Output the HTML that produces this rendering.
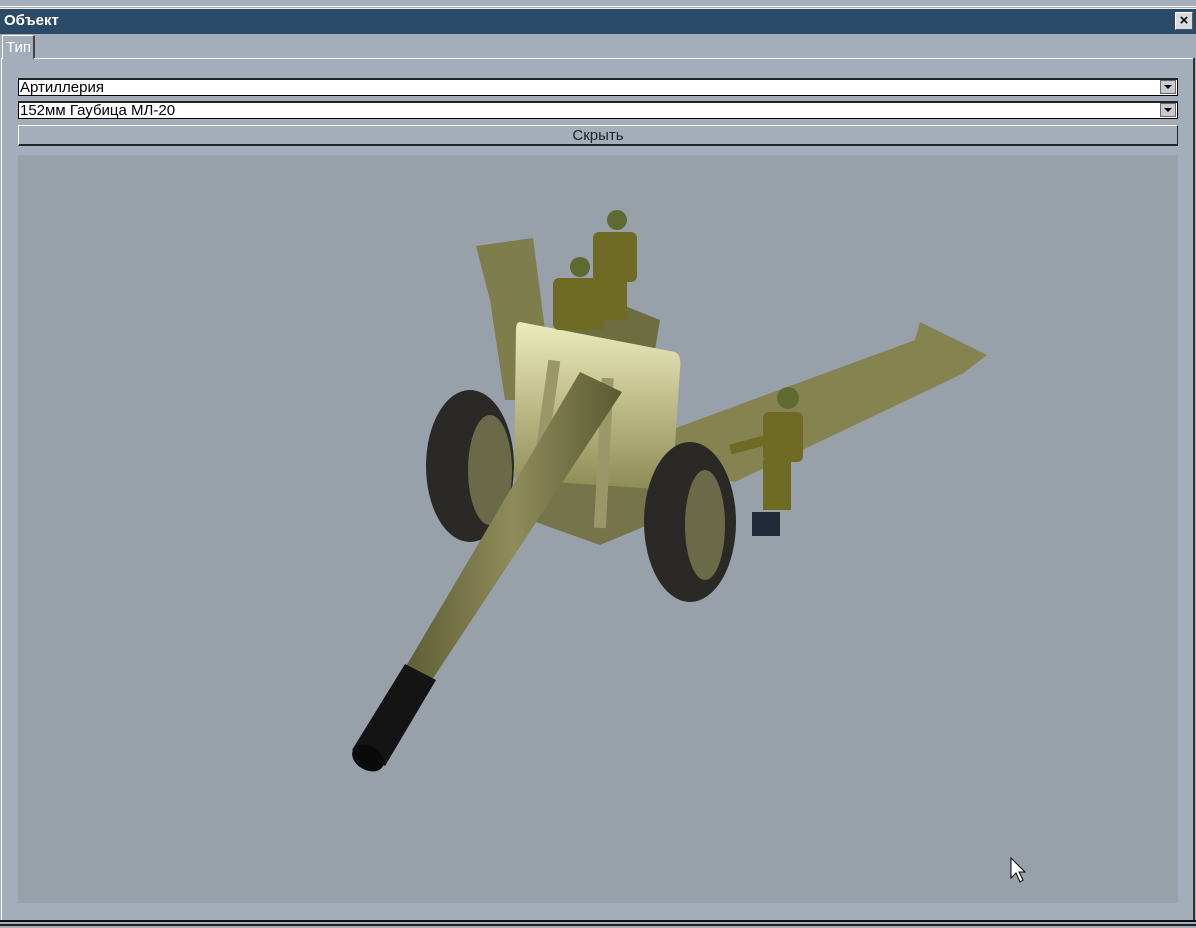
<!DOCTYPE html>
<html><head><meta charset="utf-8"><style>
body{margin:0;width:1196px;height:928px;background:#a4adba;position:relative;overflow:hidden;font-family:"Liberation Sans",sans-serif}
.abs{position:absolute}
.title{left:0;top:8px;width:1196px;height:25px;background:#2a4a68;border-top:1px solid #e8ecf0}
.title span{position:absolute;left:4px;top:3px;color:#fff;font-weight:bold;font-size:15px}
.close{right:3px;top:3px;width:16px;height:16px;background:#d8dce0;border:1px solid #fff;border-right-color:#555;border-bottom-color:#555;font-size:15px;font-weight:bold;line-height:16px;text-align:center;color:#000}
.tab{left:2px;top:35px;width:33px;height:24px;border:1px solid #fff;border-bottom:none;border-right:2px solid #444;color:#fff;font-size:15px;padding-left:3px;box-sizing:border-box;line-height:24px}
.panelline{left:34px;top:58px;width:1160px;height:1px;background:#fff}
.dd{left:18px;width:1160px;height:18px;background:#fff;border:1px solid #000;border-top:2px solid #222;font-size:15px;line-height:15px;box-sizing:border-box;padding-left:1px}
.dd i{position:absolute;right:1px;top:0px;width:16px;height:14px;background:#c8ccd2;border:1px solid #666;box-sizing:border-box}
.dd i:after{content:"";position:absolute;left:3px;top:4px;border-left:4px solid transparent;border-right:4px solid transparent;border-top:4px solid #000}
.btn{left:18px;top:125px;width:1160px;height:21px;border:1px solid #fff;border-right:1px solid #222;border-bottom:2px solid #222;box-sizing:border-box;text-align:center;font-size:15px;line-height:19px;color:#222}
.view{left:18px;top:155px;width:1160px;height:748px;background:#98a0aa}
</style></head><body>
<div class="abs" style="left:0;top:6px;width:1196px;height:1px;background:#fff"></div>
<div class="abs title"><span>Объект</span><div class="abs close">×</div></div>
<div class="abs tab">Тип</div>
<div class="abs panelline"></div>
<div class="abs" style="left:1193px;top:58px;width:2px;height:862px;background:#333"></div>
<div class="abs" style="left:1px;top:58px;width:1px;height:862px;background:#fff"></div>
<div class="abs dd" style="top:78px">Артиллерия<i></i></div>
<div class="abs dd" style="top:101px">152мм Гаубица МЛ-20<i></i></div>
<div class="abs btn">Скрыть</div>
<div class="abs view"></div>
<div class="abs" style="left:0;top:920px;width:1196px;height:2px;background:#111"></div>
<div class="abs" style="left:0;top:924px;width:1196px;height:2px;background:#222"></div>
<svg class="abs" style="left:0;top:0" width="1196" height="928">
<defs>
<linearGradient id="sh" x1="0" y1="0" x2="0" y2="1"><stop offset="0" stop-color="#ecebbc"/><stop offset="1" stop-color="#8e8c55"/></linearGradient>
<linearGradient id="bar" x1="0" y1="0" x2="1" y2="0"><stop offset="0" stop-color="#5e5d35"/><stop offset=".5" stop-color="#8e8c5a"/><stop offset="1" stop-color="#5a5a32"/></linearGradient>
</defs>
<polygon points="476,246 533,238 545,330 520,400 505,400 490,300" fill="#7e7d4c"/>
<polygon points="665,432 915,340 920,322 987,355 962,374 735,482 675,470" fill="#858451"/>
<polygon points="560,320 610,300 660,320 650,380 570,380" fill="#6e6d40"/>
<ellipse cx="470" cy="466" rx="44" ry="76" fill="#2a2926"/>
<ellipse cx="490" cy="470" rx="22" ry="55" fill="#6a6a48"/>
<polygon points="520,470 650,470 660,520 600,545 530,520" fill="#75744a"/>
<path d="M520,322 L675,352 Q682,355 680,370 L672,490 L520,480 Q512,478 514,470 L516,330 Q516,322 520,322Z" fill="url(#sh)"/>
<rect x="540" y="360" width="12" height="130" fill="#9a9868" transform="rotate(8 546 420)"/>
<rect x="598" y="378" width="12" height="150" fill="#9a9868" transform="rotate(3 604 450)"/>
<ellipse cx="690" cy="522" rx="46" ry="80" fill="#2a2926"/>
<ellipse cx="705" cy="525" rx="20" ry="55" fill="#6a6a48"/>
<polygon points="580,372 622,392 432,680 405,668" fill="url(#bar)"/>
<polygon points="405,664 436,680 385,766 352,750" fill="#141414"/>
<ellipse cx="368" cy="758" rx="17" ry="12" fill="#0a0a0a" transform="rotate(30 368 758)"/>
<g fill="#6f6a24">
<circle cx="617" cy="220" r="10" fill="#5f6a30"/><rect x="593" y="232" width="44" height="50" rx="6"/><rect x="605" y="280" width="22" height="40"/>
<circle cx="580" cy="267" r="10" fill="#5f6a30"/><rect x="553" y="278" width="52" height="52" rx="6"/>
<circle cx="788" cy="398" r="11" fill="#5f6a30"/><rect x="763" y="412" width="40" height="50" rx="6"/><rect x="730" y="442" width="38" height="10" transform="rotate(-15 740 447)"/><rect x="763" y="460" width="28" height="50"/>
</g>
<rect x="752" y="512" width="28" height="24" fill="#222a3a"/>
<path d="M1011,858 L1011,878 L1016,873 L1020,882 L1023,880 L1019,872 L1025,872Z" fill="#fff" stroke="#000" stroke-width="1"/>
</svg>
</body></html>
